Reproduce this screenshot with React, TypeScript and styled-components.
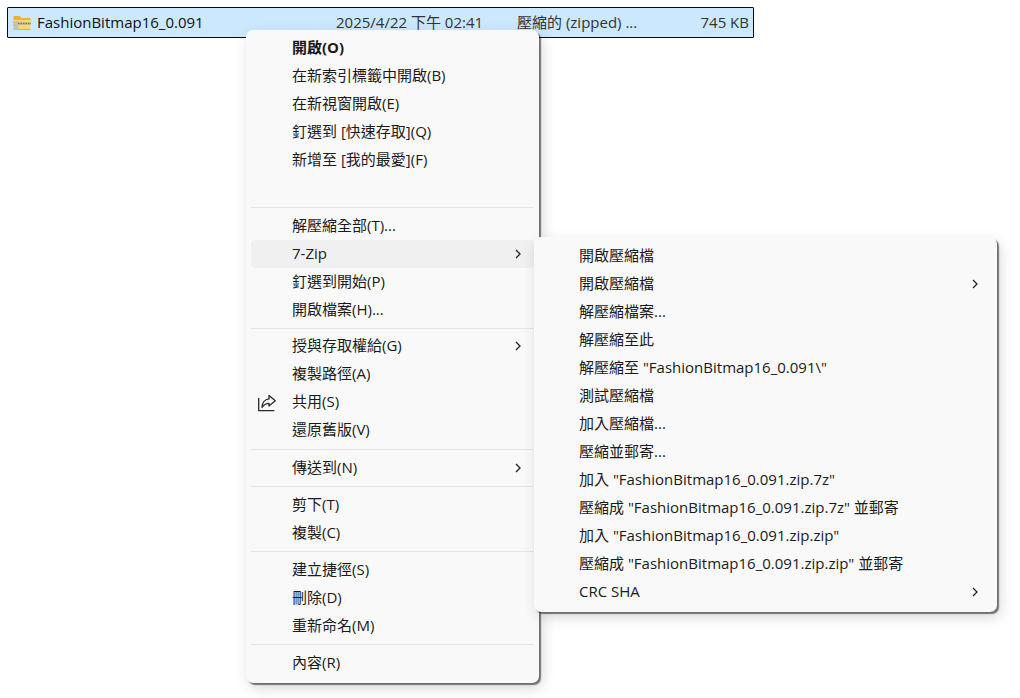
import { createGlobalStyle } from "styled-components";
import styled from "styled-components";

const GlobalStyle = createGlobalStyle`
  html, body {
    margin: 0;
    padding: 0;
    background: #ffffff;
  }
  body {
    font-family: "Open Sans", "Noto Sans CJK TC", sans-serif;
    font-size: 15px;
    color: #1a1a1a;
  }
`;

const Page = styled.div`
  position: relative;
  width: 1020px;
  height: 698px;
  padding: 7px 0 0 7px;
  box-sizing: border-box;
  overflow: hidden;
`;

const FileRow = styled.div`
  display: flex;
  align-items: center;
  box-sizing: border-box;
  width: 747px;
  height: 31px;
  padding: 0 4px 0 5px;
  background: #cce8ff;
  border: 1px solid #0c0c0c;
  border-radius: 1px;
`;

const FileCell = styled.span<{ $width: number; $right?: boolean }>`
  width: ${({ $width }) => $width}px;
  flex: none;
  padding-bottom: 2px;
  white-space: nowrap;
  color: #333;
  text-align: ${({ $right }) => ($right ? "right" : "left")};
`;

const FileName = styled(FileCell)`
  color: #111;
  margin-left: 6px;
`;

const Menu = styled.div<{ $left: number; $top: number; $width: number; $padTop: number }>`
  position: absolute;
  left: ${({ $left }) => $left}px;
  top: ${({ $top }) => $top}px;
  width: ${({ $width }) => $width}px;
  box-sizing: border-box;
  padding: ${({ $padTop }) => $padTop}px 5px 6px;
  background: #f9f9f9;
  border-radius: 7px;
  box-shadow:
    2px 2px 1px rgba(0, 0, 0, 0.5),
    3px 5px 14px rgba(0, 0, 0, 0.16);
`;

const Item = styled.div<{ $active?: boolean; $bold?: boolean; $indent: number }>`
  position: relative;
  height: 28px;
  line-height: 26px;
  padding-left: ${({ $indent }) => $indent}px;
  border-radius: 4px;
  white-space: nowrap;
  font-weight: ${({ $bold }) => ($bold ? 700 : 400)};
  background: ${({ $active }) => ($active ? "#f0f0f0" : "transparent")};
`;

const Separator = styled.div<{ $height: number }>`
  display: flex;
  align-items: center;
  height: ${({ $height }) => $height}px;

  &::after {
    content: "";
    flex: 1;
    height: 1px;
    background: #e5e5e5;
  }
`;

const Chevron = styled.svg<{ $right: number }>`
  position: absolute;
  right: ${({ $right }) => $right}px;
  top: 9px;
  width: 10px;
  height: 10px;
`;

const ShareIcon = styled.svg`
  position: absolute;
  left: 6px;
  top: 6px;
  width: 20px;
  height: 18px;
`;

const ZipIcon = styled.svg`
  flex: none;
  width: 18px;
  height: 16px;
`;

type Row =
  | { sep: number }
  | { label: string; bold?: boolean; sub?: boolean; active?: boolean; share?: boolean };

const mainRows: Row[] = [
  { label: "開啟(O)", bold: true },
  { label: "在新索引標籤中開啟(B)" },
  { label: "在新視窗開啟(E)" },
  { label: "釘選到 [快速存取](Q)" },
  { label: "新增至 [我的最愛](F)" },
  { label: "" },
  { sep: 10 },
  { label: "解壓縮全部(T)..." },
  { label: "7-Zip", sub: true, active: true },
  { label: "釘選到開始(P)" },
  { label: "開啟檔案(H)..." },
  { sep: 8 },
  { label: "授與存取權給(G)", sub: true },
  { label: "複製路徑(A)" },
  { label: "共用(S)", share: true },
  { label: "還原舊版(V)" },
  { sep: 10 },
  { label: "傳送到(N)", sub: true },
  { sep: 9 },
  { label: "剪下(T)" },
  { label: "複製(C)" },
  { sep: 9 },
  { label: "建立捷徑(S)" },
  { label: "刪除(D)" },
  { label: "重新命名(M)" },
  { sep: 9 },
  { label: "內容(R)" },
];

const subRows: Row[] = [
  { label: "開啟壓縮檔" },
  { label: "開啟壓縮檔", sub: true },
  { label: "解壓縮檔案..." },
  { label: "解壓縮至此" },
  { label: '解壓縮至 "FashionBitmap16_0.091\\"' },
  { label: "測試壓縮檔" },
  { label: "加入壓縮檔..." },
  { label: "壓縮並郵寄..." },
  { label: '加入 "FashionBitmap16_0.091.zip.7z"' },
  { label: '壓縮成 "FashionBitmap16_0.091.zip.7z" 並郵寄' },
  { label: '加入 "FashionBitmap16_0.091.zip.zip"' },
  { label: '壓縮成 "FashionBitmap16_0.091.zip.zip" 並郵寄' },
  { label: "CRC SHA", sub: true },
];

function ZipFolder() {
  return (
    <ZipIcon viewBox="0 0 18 16">
      <path d="M0.5 1h6l2 2h9v3h-17z" fill="#eeb13a" />
      <rect x="0.5" y="5" width="17" height="10" fill="#fcd670" />
      <rect x="0.5" y="14" width="17" height="1" fill="#e5ae37" />
      <rect x="0.5" y="7" width="17" height="3" fill="#d6c48e" />
      <rect x="0.5" y="6" width="5" height="9" fill="#c4c0b4" />
      <path d="M5 8.5h13" stroke="#77705e" strokeWidth="1.5" strokeDasharray="1.5 1" />
    </ZipIcon>
  );
}

function MenuRows({ rows, indent, chevronRight }: { rows: Row[]; indent: number; chevronRight: number }) {
  return (
    <>
      {rows.map((row, i) =>
        "sep" in row ? (
          <Separator key={i} $height={row.sep} />
        ) : (
          <Item key={i} $indent={indent} $active={row.active} $bold={row.bold}>
            {row.share && (
              <ShareIcon viewBox="0 0 20 18" fill="none" stroke="#2b2b2b" strokeWidth="1.3">
                <path d="M1.7 4v12.6h15.6" />
                <path d="M12 1.5l6.3 5.3-6.3 5.2V9.3C9 9.3 6.7 10.6 5 13.5c0-4.5 2.7-8 7-8.6z" strokeLinejoin="round" />
              </ShareIcon>
            )}
            {row.label}
            {row.sub && (
              <Chevron $right={chevronRight} viewBox="0 0 10 10" fill="none" stroke="#222" strokeWidth="1.3">
                <path d="M3 1l4 4-4 4" />
              </Chevron>
            )}
          </Item>
        )
      )}
    </>
  );
}

export default function App() {
  return (
    <Page>
      <GlobalStyle />
      <FileRow>
        <ZipFolder />
        <FileName $width={299}>FashionBitmap16_0.091</FileName>
        <FileCell $width={181}>2025/4/22 下午 02:41</FileCell>
        <FileCell $width={130}>壓縮的 (zipped) ...</FileCell>
        <FileCell $width={102} $right>
          745 KB
        </FileCell>
      </FileRow>
      <Menu $left={246} $top={30} $width={293} $padTop={4}>
        <MenuRows rows={mainRows} indent={41} chevronRight={11} />
      </Menu>
      <Menu $left={534} $top={237} $width={463} $padTop={5}>
        <MenuRows rows={subRows} indent={40} chevronRight={12} />
      </Menu>
    </Page>
  );
}
